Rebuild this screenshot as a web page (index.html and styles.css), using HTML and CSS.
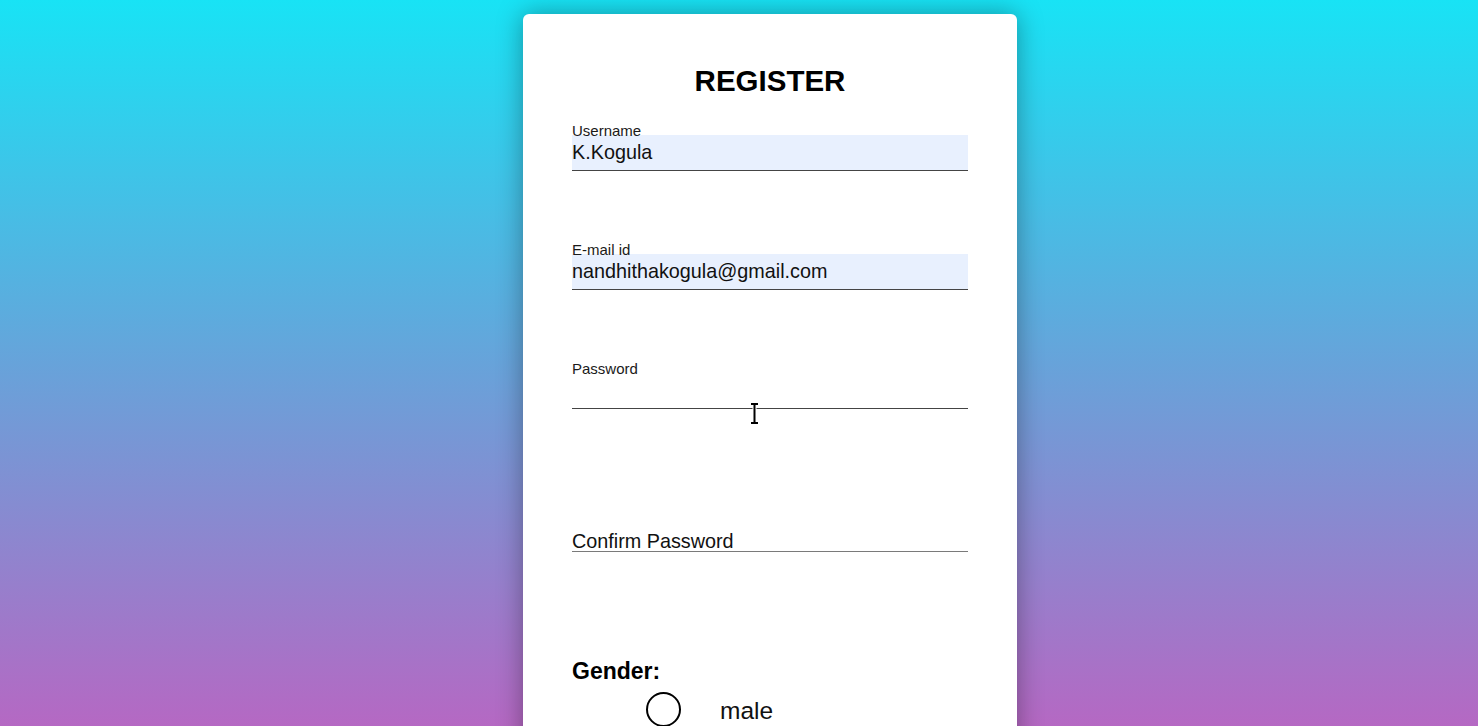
FILE: index.html
```html
<!DOCTYPE html>
<html lang="en">
<head>
<meta charset="utf-8">
<title>Register</title>
<link rel="stylesheet" href="styles.css">
</head>
<body>
<main class="card">
  <form class="form">
    <h2 class="title">REGISTER</h2>
    <div class="field">
      <label class="label" for="u">Username</label>
      <input class="input filled" id="u" type="text" value="K.Kogula">
    </div>
    <div class="field">
      <label class="label" for="e">E-mail id</label>
      <input class="input filled" id="e" type="text" value="nandhithakogula@gmail.com">
    </div>
    <div class="field field-pw">
      <label class="label" for="p">Password</label>
      <input class="input" id="p" type="password">
      <svg class="cursor" width="11" height="23" viewBox="0 0 11 23" aria-hidden="true">
        <path d="M2 2H9M5.5 2V21M2 21H9" stroke="#fff" stroke-width="4" fill="none"/>
        <path d="M2 2H9M5.5 2V21M2 21H9" stroke="#000" stroke-width="2" fill="none"/>
      </svg>
    </div>
    <div class="field field-confirm">
      <input class="input input-light" id="c" type="password">
      <label class="float-label" for="c">Confirm Password</label>
    </div>
    <h3 class="gender">Gender:</h3>
    <div class="radio-row">
      <input class="radio" type="radio" name="g" id="m">
      <label class="radio-label" for="m">male</label>
    </div>
  </form>
</main>
</body>
</html>
```
FILE: styles.css
```css
html, body {
  margin: 0;
  height: 100%;
}
body {
  overflow: hidden;
  background: linear-gradient(180deg, #18e3f5 0%, #67a3da 50%, #b568c3 100%);
  font-family: "Liberation Sans", Arial, sans-serif;
  color: #111;
}
.card {
  width: 494px;
  margin: 14px 0 0 calc(50% - 216px);
  background: #fff;
  border-radius: 6px;
  box-shadow: 0 0 26px rgba(0, 0, 0, 0.35);
  padding-top: 50px;
  height: 800px;
  box-sizing: border-box;
}
.form {
  width: 396px;
  margin: 0 auto;
}
.title {
  margin: 0 0 26px;
  font-size: 29.5px;
  line-height: 33px;
  font-weight: 700;
  text-align: center;
  color: #000;
}
.field {
  position: relative;
  margin-bottom: 71px;
}
.label {
  display: block;
  font-size: 15px;
  line-height: 15px;
  margin-bottom: -3px;
  position: relative;
  z-index: 1;
  color: #1a1a1a;
}
.input {
  display: block;
  width: 100%;
  height: 36px;
  box-sizing: border-box;
  border: 0;
  border-bottom: 1px solid #444;
  background: transparent;
  padding: 0;
  margin: 0;
  font-family: inherit;
  font-size: 19.8px;
  color: #111;
  outline: none;
}
.input.filled {
  background: #e8f0fe;
}
.field-pw {
  margin-bottom: 95px;
}
.cursor {
  position: absolute;
  left: 177px;
  top: 41px;
}
.field-confirm {
  padding-top: 12px;
  margin-bottom: 107px;
}
.input-light {
  border-bottom-color: #7a7a7a;
}
.float-label {
  position: absolute;
  left: 0;
  bottom: 1px;
  font-size: 19.8px;
  line-height: 20px;
  color: #111;
}
.gender {
  margin: 0;
  font-size: 23px;
  line-height: 25px;
  font-weight: 700;
  color: #000;
}
.radio-row {
  display: flex;
  align-items: center;
  margin-top: 8px;
  padding-left: 74px;
}
.radio {
  appearance: none;
  -webkit-appearance: none;
  width: 35px;
  height: 35px;
  margin: 0;
  border: 2px solid #000;
  border-radius: 50%;
  box-sizing: border-box;
  background: #fff;
}
.radio-label {
  margin-left: 39px;
  padding-top: 2px;
  font-size: 24.5px;
  line-height: 26px;
  color: #111;
}
```
